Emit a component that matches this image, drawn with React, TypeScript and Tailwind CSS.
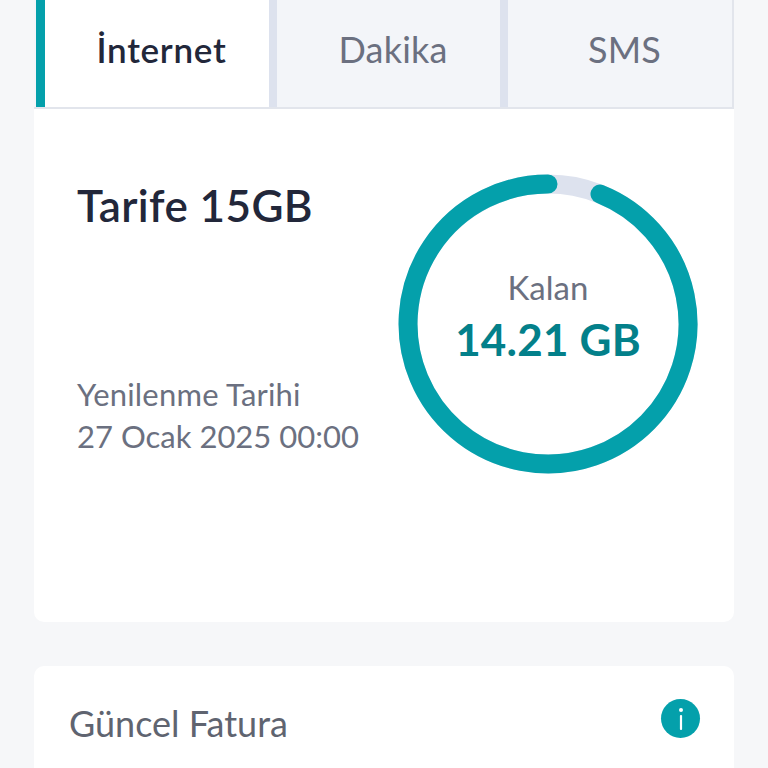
const font = "font-['Lato','Noto_Sans',sans-serif]";

function Tab({ label, active }: { label: string; active?: boolean }) {
  return (
    <div
      className={
        active
          ? "flex h-full flex-1 items-center justify-center border-l-[9px] border-[#04a0ab] bg-white pb-[9px] pl-[9px] text-[35px] font-semibold tracking-[0.7px] text-[#22273a]"
          : "flex h-full flex-1 items-center justify-center pb-[9px] pl-[9px] text-[36px] tracking-[0.2px] text-[#6b7080]"
      }
    >
      {label}
    </div>
  );
}

function Ring() {
  return (
    <div className="relative h-[300px] w-[300px]">
      <svg width="300" height="300" viewBox="0 0 300 300">
        <circle cx="150" cy="150" r="140" fill="none" stroke="#dde2ee" strokeWidth="19" />
        <path
          d="M 202 20 A 140 140 0 1 1 150 10"
          fill="none"
          stroke="#04a0ab"
          strokeWidth="19"
          strokeLinecap="round"
        />
      </svg>
      <div className="absolute inset-0 flex flex-col items-center justify-center pb-[16px]">
        <span className="text-[33px] leading-[44px] text-[#6b7080]">Kalan</span>
        <span className="mt-[2px] text-[44px] font-bold leading-[56px] tracking-[0.2px] text-[#03808a]">14.21 GB</span>
      </div>
    </div>
  );
}

export default function App() {
  return (
    <div className={`${font} h-[768px] w-[768px] overflow-hidden bg-[#f6f7f9] px-[34px]`}>
      <div className="flex h-[109px] border-b-2 border-r-2 border-[#e2e5ec] bg-[#f3f5f9] pl-[2px]">
        <div className="flex h-full w-[233px]">
          <Tab label="İnternet" active />
        </div>
        <div className="h-full w-[8px] bg-[#dde2ee]" />
        <div className="flex h-full w-[223px]">
          <Tab label="Dakika" />
        </div>
        <div className="h-full w-[8px] bg-[#dde2ee]" />
        <div className="flex h-full flex-1">
          <Tab label="SMS" />
        </div>
      </div>

      <div className="flex h-[513px] justify-between rounded-b-[10px] bg-white pl-[43px] pr-[36px] pt-[65px]">
        <div className="flex h-[300px] flex-col justify-between">
          <h2 className="pt-[5px] text-[44px] font-semibold leading-[52px] tracking-[0.4px] text-[#22273a]">Tarife 15GB</h2>
          <p className="mb-[17px] text-[31px] leading-[42px] text-[#6b7080]">
            <span className="tracking-[0.2px]">Yenilenme Tarihi</span>
            <br />
            27 Ocak 2025 00:00
          </p>
        </div>
        <Ring />
      </div>

      <div className="mt-[44px] flex h-[200px] items-start justify-between rounded-[10px] bg-white pl-[35px] pr-[34px] pt-[33px]">
        <span className="pt-[2px] text-[36px] leading-[44px] text-[#5f6470]">Güncel Fatura</span>
        <span className="flex h-[39px] w-[39px] items-center justify-center rounded-full bg-[#04a0ab]">
          <svg width="6" height="26" viewBox="0 0 6 26">
            <circle cx="3" cy="4" r="2" fill="#fff" />
            <rect x="1.9" y="9" width="2.2" height="15" rx="1" fill="#fff" />
          </svg>
        </span>
      </div>
    </div>
  );
}
